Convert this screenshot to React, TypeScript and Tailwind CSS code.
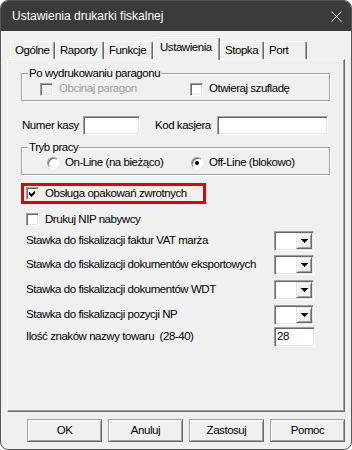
import type { ReactNode } from 'react';

const SUNKEN =
  'border border-t-[#a0a0a0] border-l-[#a0a0a0] border-r-white border-b-white shadow-[inset_1px_1px_0_#696969,inset_-1px_-1px_0_#e3e3e3]';
const RAISED =
  'border border-t-[#e3e3e3] border-l-[#e3e3e3] border-r-[#696969] border-b-[#696969] shadow-[inset_1px_1px_0_#fff,inset_-1px_-1px_0_#a0a0a0]';

function CheckBox({ checked = false, disabled = false }: { checked?: boolean; disabled?: boolean }) {
  return (
    <div
      className={`w-[13px] h-[13px] shrink-0 flex items-center justify-center ${SUNKEN} ${
        disabled ? 'bg-[#f0f0f0]' : 'bg-white'
      }`}
    >
      {checked && (
        <svg width="9" height="9" viewBox="0 0 9 9" shapeRendering="crispEdges">
          <path d="M1 3h1v1h1v1h1V4h1V3h1V2h1v2H7v1H6v1H5v1H4v1H3V7H2V6H1z" fill="#000" />
        </svg>
      )}
    </div>
  );
}

function Radio({ checked = false }: { checked?: boolean }) {
  return (
    <div className="w-[12px] h-[12px] shrink-0 rounded-full bg-white border border-t-[#a0a0a0] border-l-[#a0a0a0] border-r-white border-b-white shadow-[inset_1px_1px_0_#696969] flex items-center justify-center">
      {checked && <div className="w-[4px] h-[4px] rounded-full bg-black" />}
    </div>
  );
}

function Group({ label, children }: { label: string; children: ReactNode }) {
  return (
    <div className="relative w-[309px] h-[28px] border border-[#a0a0a0] shadow-[inset_1px_1px_0_#fff,1px_1px_0_#fff] flex items-center pt-[4px]">
      <span className="absolute left-[6px] -top-[8px] px-[1px] bg-[#f0f0f0] leading-[14px]">{label}</span>
      {children}
    </div>
  );
}

function Combo() {
  return (
    <div className={`w-[40px] h-[20px] shrink-0 flex bg-white ${SUNKEN}`}>
      <div className="flex-1" />
      <div className={`w-[16px] my-[1px] mr-[1px] bg-[#f0f0f0] flex items-center justify-center ${RAISED}`}>
        <svg width="7" height="4" viewBox="0 0 7 4" shapeRendering="crispEdges">
          <path d="M0 0h7v1H6v1H5v1H4v1H3V3H2V2H1V1H0z" fill="#000" />
        </svg>
      </div>
    </div>
  );
}

const TABS = [
  { name: 'Ogólne', w: 'w-[45px]' },
  { name: 'Raporty', w: 'w-[49px]' },
  { name: 'Funkcje', w: 'w-[49px]' },
  { name: 'Ustawienia', w: 'w-[67px]', active: true },
  { name: 'Stopka', w: 'w-[44px]' },
  { name: 'Port', w: 'w-[43px]' },
];

const RATES = [
  { label: 'Stawka do fiskalizacji faktur VAT marża', mt: 'mt-[5px]' },
  { label: 'Stawka do fiskalizacji dokumentów eksportowych', mt: 'mt-[4px]' },
  { label: 'Stawka do fiskalizacji dokumentów WDT', mt: 'mt-[5px]' },
  { label: 'Stawka do fiskalizacji pozycji NP', mt: 'mt-[5px]' },
];

export default function App() {
  return (
    <div className="w-[352px] h-[450px] bg-white">
      <div className="w-[352px] h-[450px] rounded-[8px] overflow-hidden border border-[#575757] bg-[#f0f0f0] flex flex-col font-['Liberation_Sans',Arial,sans-serif] text-[11.5px] tracking-[-0.45px] text-black">
        {/* Title bar */}
        <div className="h-[30px] shrink-0 bg-[#3b3b3b] flex items-center pl-[11px] pr-[9px]">
          <span className="text-white text-[12px] tracking-normal flex-1">Ustawienia drukarki fiskalnej</span>
          <svg width="11" height="11" viewBox="0 0 11 11">
            <path d="M0.5 0.5l10 10M10.5 0.5l-10 10" stroke="#fff" strokeWidth="1" />
          </svg>
        </div>

        <div className="flex-1 flex flex-col px-[6px] pt-[6px]">
          {/* Tabs */}
          <div className="h-[22px] flex items-end pl-[3px]">
            {TABS.map((t) =>
              t.active ? (
                <div
                  key={t.name}
                  className={`${t.w} h-[23px] -mb-px relative z-10 bg-[#f0f0f0] border-t border-l border-r border-t-white border-l-white border-r-[#696969] shadow-[inset_-1px_0_0_#a0a0a0] rounded-t-[2px] flex items-center pl-[6px] pb-[2px]`}
                >
                  {t.name}
                </div>
              ) : (
                <div
                  key={t.name}
                  className={`${t.w} h-[18px] border-t border-l border-r border-t-white border-l-white border-r-[#696969] shadow-[inset_-1px_0_0_#a0a0a0] rounded-t-[2px] flex items-center pl-[4px]`}
                >
                  {t.name}
                </div>
              ),
            )}
          </div>

          {/* Panel */}
          <div className="h-[353px] border border-white border-r-[#696969] border-b-[#696969] shadow-[inset_-1px_-1px_0_#a0a0a0] pl-[13px] pt-[13px] flex flex-col">
            <Group label="Po wydrukowaniu paragonu">
              <div className="w-[150px] ml-[18px] flex items-center gap-[6px]">
                <CheckBox disabled />
                <span className="text-[#a0a0a0]">Obcinaj paragon</span>
              </div>
              <div className="flex items-center gap-[6px]">
                <CheckBox />
                <span>Otwieraj szufladę</span>
              </div>
            </Group>

            <div className="mt-[15px] h-[19px] flex items-center">
              <span className="ml-[1px] w-[61px]">Numer kasy</span>
              <div className={`w-[57px] h-[19px] bg-white ${SUNKEN}`} />
              <span className="ml-[15px] w-[62px]">Kod kasjera</span>
              <div className={`w-[111px] h-[19px] bg-white ${SUNKEN}`} />
            </div>

            <div className="mt-[12px]">
              <Group label="Tryb pracy">
                <div className="w-[144px] ml-[25px] flex items-center gap-[6px]">
                  <Radio />
                  <span>On-Line (na bieżąco)</span>
                </div>
                <div className="flex items-center gap-[6px]">
                  <Radio checked />
                  <span>Off-Line (blokowo)</span>
                </div>
              </Group>
            </div>

            <div className="mt-[8px] w-[185px] h-[21px] border-[3px] border-[#e50000] flex items-center pl-[2px] gap-[6px]">
              <CheckBox checked />
              <span>Obsługa opakowań zwrotnych</span>
            </div>

            <div className="mt-[9px] h-[13px] ml-[5px] flex items-center gap-[6px]">
              <CheckBox />
              <span>Drukuj NIP nabywcy</span>
            </div>

            {RATES.map((r) => (
              <div key={r.label} className={`${r.mt} h-[20px] ml-[5px] flex items-center`}>
                <span className="w-[248px]">{r.label}</span>
                <Combo />
              </div>
            ))}

            <div className="mt-[2px] h-[20px] ml-[5px] flex items-center">
              <span className="w-[248px] whitespace-pre">Ilość znaków nazwy towaru  (28-40)</span>
              <div className={`w-[41px] h-[20px] bg-white ${SUNKEN} flex items-center pl-[2px]`}>28</div>
            </div>
          </div>

          {/* Buttons */}
          <div className="mt-[7px] flex justify-end gap-[6px]">
            {['OK', 'Anuluj', 'Zastosuj', 'Pomoc'].map((b) => (
              <div
                key={b}
                className="w-[75px] h-[23px] bg-[#f0f0f0] border border-t-[#a0a0a0] border-l-[#a0a0a0] border-r-[#696969] border-b-[#696969] shadow-[inset_1px_1px_0_#fff,inset_-1px_-1px_0_#a0a0a0] flex items-center justify-center"
              >
                {b}
              </div>
            ))}
          </div>
        </div>
      </div>
    </div>
  );
}
